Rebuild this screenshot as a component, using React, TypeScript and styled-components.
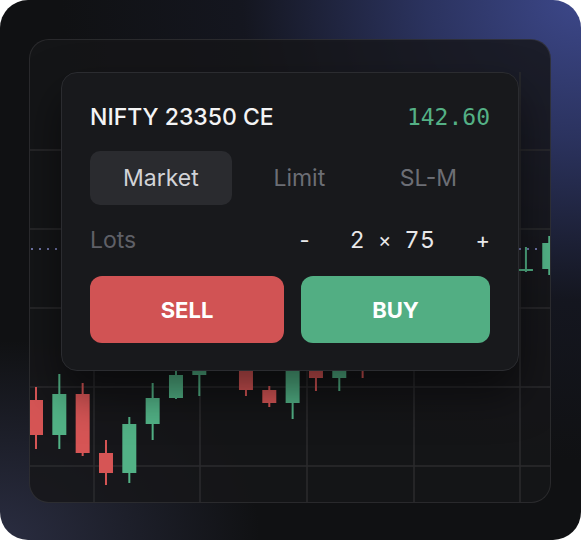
import styled, { createGlobalStyle } from 'styled-components';

interface Candle {
  x: number;
  open: number;
  close: number;
  high: number;
  low: number;
}

// y values are in page pixels, the chart's viewBox uses the same space
const CANDLE_STEP = 23.33;
const CANDLE_START = 36;

const candles: Candle[] = [
  { x: 0, open: 400, close: 435, high: 387, low: 449 },
  { x: 1, open: 435, close: 394, high: 374, low: 449 },
  { x: 2, open: 394, close: 453, high: 383, low: 456 },
  { x: 3, open: 453, close: 473, high: 440, low: 485 },
  { x: 4, open: 473, close: 424, high: 417, low: 483 },
  { x: 5, open: 424, close: 398, high: 383, low: 440 },
  { x: 6, open: 398, close: 375, high: 360, low: 399 },
  { x: 7, open: 375, close: 362, high: 350, low: 396 },
  { x: 8, open: 362, close: 332, high: 320, low: 366 },
  { x: 9, open: 350, close: 390, high: 340, low: 396 },
  { x: 10, open: 390, close: 403, high: 386, low: 407 },
  { x: 11, open: 403, close: 340, high: 330, low: 419 },
  { x: 12, open: 350, close: 378, high: 340, low: 391 },
  { x: 13, open: 378, close: 350, high: 340, low: 391 },
  { x: 14, open: 330, close: 366, high: 320, low: 378 },
  { x: 15, open: 340, close: 310, high: 300, low: 350 },
  { x: 16, open: 310, close: 290, high: 280, low: 320 },
  { x: 17, open: 290, close: 300, high: 282, low: 310 },
  { x: 18, open: 300, close: 270, high: 262, low: 305 },
  { x: 19, open: 270, close: 260, high: 250, low: 280 },
  { x: 20, open: 262, close: 272, high: 255, low: 280 },
  { x: 21, open: 271, close: 269, high: 247, low: 272 },
  { x: 22, open: 269, close: 243, high: 236, low: 275 },
];

const H_LINES = [150, 229, 308, 387, 466];
const V_LINES = [94, 200, 307, 414, 520];

const UP = '#52b286';
const DOWN = '#d65555';

const GlobalStyle = createGlobalStyle`
  body {
    margin: 0;
    background: #ffffff;
    font-family: Inter, 'Noto Sans', sans-serif;
  }
`;

function CandleChart() {
  return (
    <ChartSvg viewBox="30 40 520 462" preserveAspectRatio="none">
      {H_LINES.map((y) => (
        <line key={`h${y}`} x1={30} x2={550} y1={y} y2={y} stroke="#2b2b2e" strokeWidth={1.5} />
      ))}
      {V_LINES.map((x) => (
        <line key={`v${x}`} x1={x} x2={x} y1={72} y2={502} stroke="#2b2b2e" strokeWidth={1.5} />
      ))}
      <line x1={31} x2={550} y1={249} y2={249} stroke="#8c92d8" strokeWidth={1.5} strokeDasharray="2 6" />
      {candles.map((c) => {
        const cx = CANDLE_START + c.x * CANDLE_STEP;
        const color = c.close < c.open ? UP : DOWN;
        const top = Math.min(c.open, c.close);
        const h = Math.max(Math.abs(c.open - c.close), 2);
        return (
          <g key={c.x}>
            <line x1={cx} x2={cx} y1={c.high} y2={c.low} stroke={color} strokeWidth={2} />
            <rect x={cx - 7} y={top} width={14} height={h} fill={color} />
          </g>
        );
      })}
    </ChartSvg>
  );
}

export default function App() {
  return (
    <>
      <GlobalStyle />
      <Frame>
        <ChartPanel>
          <CandleChart />
          <OrderCard>
            <Header>
              <Symbol>NIFTY 23350 CE</Symbol>
              <Price>142.60</Price>
            </Header>

            <Tabs>
              <Tab $active>Market</Tab>
              <Tab>Limit</Tab>
              <Tab>SL-M</Tab>
            </Tabs>

            <LotsRow>
              <LotsLabel>Lots</LotsLabel>
              <Stepper>
                <StepButton>-</StepButton>
                <Qty>
                  <span>2</span>
                  <Times>×</Times>
                  <span>75</span>
                </Qty>
                <StepButton>+</StepButton>
              </Stepper>
            </LotsRow>

            <Actions>
              <ActionButton $side="sell">SELL</ActionButton>
              <ActionButton $side="buy">BUY</ActionButton>
            </Actions>
          </OrderCard>
        </ChartPanel>
      </Frame>
    </>
  );
}

const Frame = styled.div`
  width: 581px;
  height: 540px;
  box-sizing: border-box;
  padding: 39px 30px 37px 29px;
  border-radius: 28px;
  overflow: hidden;
  background:
    radial-gradient(ellipse 520px 460px at 100% 0%, #3c4789 0%, rgba(52, 62, 120, 0.75) 30%, rgba(30, 34, 60, 0.3) 65%, rgba(16, 17, 19, 0) 100%),
    radial-gradient(ellipse 260px 200px at 0% 100%, #2a2d41 0%, rgba(16, 17, 19, 0) 100%),
    #101113;
`;

const ChartPanel = styled.div`
  height: 100%;
  box-sizing: border-box;
  display: grid;
  grid-template: 100% / 100%;
  border: 1px solid rgba(255, 255, 255, 0.09);
  border-radius: 20px;
  background: rgba(22, 22, 24, 0.82);
  overflow: hidden;
`;

const ChartSvg = styled.svg`
  grid-area: 1 / 1;
  width: 100%;
  height: 100%;
  display: block;
`;

const OrderCard = styled.div`
  grid-area: 1 / 1;
  align-self: start;
  margin: 32px 31px 0 31px;
  padding: 29px 28px 27px;
  display: flex;
  flex-direction: column;
  gap: 20px;
  background: #18191c;
  border: 1px solid #2b2c30;
  border-radius: 16px;
  box-shadow: 0 22px 44px rgba(0, 0, 0, 0.5);
`;

const Header = styled.div`
  display: flex;
  align-items: center;
  justify-content: space-between;
  height: 29px;
`;

const Symbol = styled.div`
  font-size: 23px;
  font-weight: 500;
  color: #f4f4f5;
`;

const Price = styled.div`
  font-family: 'DejaVu Sans Mono', 'Liberation Mono', monospace;
  font-size: 23px;
  color: #54b085;
`;

const Tabs = styled.div`
  display: flex;
  justify-content: space-between;
`;

const Tab = styled.div<{ $active?: boolean }>`
  height: 54px;
  padding: 0 33px;
  display: flex;
  align-items: center;
  border-radius: 10px;
  font-size: 23px;
  color: ${(p) => (p.$active ? '#d2d3d7' : '#6c6e75')};
  background: ${(p) => (p.$active ? '#2a2b2f' : 'transparent')};
`;

const LotsRow = styled.div`
  height: 30px;
  display: flex;
  align-items: center;
  justify-content: space-between;
`;

const LotsLabel = styled.div`
  font-size: 23px;
  color: #5f6067;
`;

const Stepper = styled.div`
  display: flex;
  align-items: center;
  gap: 40px;
  font-size: 23px;
  color: #e8e8ea;
`;

const StepButton = styled.span`
  font-size: 22px;
  color: #e8e8ea;
`;

const Qty = styled.span`
  display: inline-flex;
  align-items: center;
  gap: 13px;
  font-variant-numeric: tabular-nums;
  letter-spacing: 0.5px;
`;

const Times = styled.span`
  font-size: 20px;
`;

const Actions = styled.div`
  display: grid;
  grid-template-columns: 194px 1fr;
  gap: 17px;
  margin-top: 1px;
`;

const ActionButton = styled.button<{ $side: 'buy' | 'sell' }>`
  height: 67px;
  border: none;
  border-radius: 12px;
  font-family: Inter, 'Noto Sans', sans-serif;
  font-size: 22px;
  font-weight: 700;
  color: #ffffff;
  background: ${(p) => (p.$side === 'sell' ? '#d15354' : '#52ae83')};
`;
